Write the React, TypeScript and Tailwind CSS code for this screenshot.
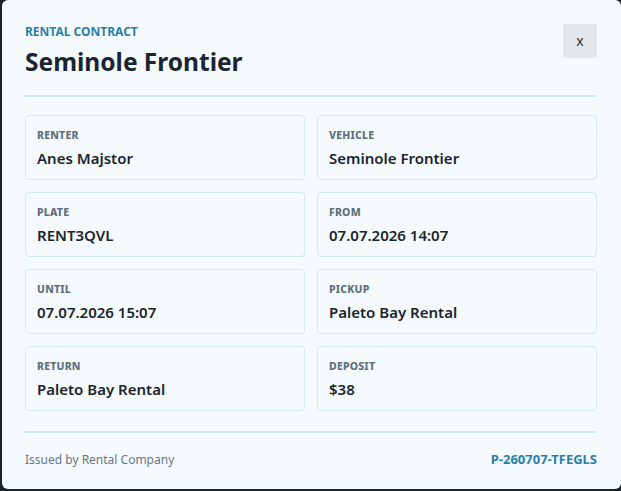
import React from 'react';

type Field = { label: string; value: string };

const fields: Field[] = [
  { label: 'Renter', value: 'Anes Majstor' },
  { label: 'Vehicle', value: 'Seminole Frontier' },
  { label: 'Plate', value: 'RENT3QVL' },
  { label: 'From', value: '07.07.2026 14:07' },
  { label: 'Until', value: '07.07.2026 15:07' },
  { label: 'Pickup', value: 'Paleto Bay Rental' },
  { label: 'Return', value: 'Paleto Bay Rental' },
  { label: 'Deposit', value: '$38' },
];

const FieldCard: React.FC<Field> = ({ label, value }) => (
  <div className="h-[65px] rounded-[4px] border border-[#d3e9f4] bg-[#f5fafd] px-[11px] pt-[12px]">
    <div className="text-[10.5px] font-extrabold uppercase leading-[14px] tracking-[0.2px] text-[#5e707d]">{label}</div>
    <div className="mt-[6px] text-[15px] font-semibold leading-[20px] text-[#1b2530]">{value}</div>
  </div>
);

const App: React.FC = () => {
  return (
    <div className="h-[491px] w-[621px] overflow-hidden bg-[#1b2228] pl-[2px] pb-[2px] font-['Noto_Sans','Open_Sans',sans-serif]">
      <div className="h-[489px] w-[619px] rounded-[6px] bg-[#f5fafd] pl-[23px] pr-[24px] pt-[24px]">
        <div className="flex items-start justify-between">
          <div>
            <div className="text-[12px] font-bold uppercase leading-[16px] text-[#2a7fa6]">Rental Contract</div>
            <h1 className="mt-[6px] text-[24.5px] font-bold leading-[32px] text-[#1b2530]">Seminole Frontier</h1>
          </div>
          <button className="h-[34px] w-[34px] rounded-[3px] bg-[#e3e6e9] text-[14px] leading-none text-[#333]">x</button>
        </div>

        <div className="mt-[17px] h-[2px] bg-[#d3eaf4]" />

        <div className="mt-[18px] grid grid-cols-2 gap-[12px]">
          {fields.map((f) => (
            <FieldCard key={f.label} label={f.label} value={f.value} />
          ))}
        </div>

        <div className="mt-[20px] h-[2px] bg-[#d3eaf4]" />

        <div className="mt-[17px] flex items-center justify-between">
          <span className="text-[12px] text-[#6a7782]">Issued by Rental Company</span>
          <span className="text-[13px] font-bold text-[#2a7fa6]">P-260707-TFEGLS</span>
        </div>
      </div>
    </div>
  );
};

export default App;
